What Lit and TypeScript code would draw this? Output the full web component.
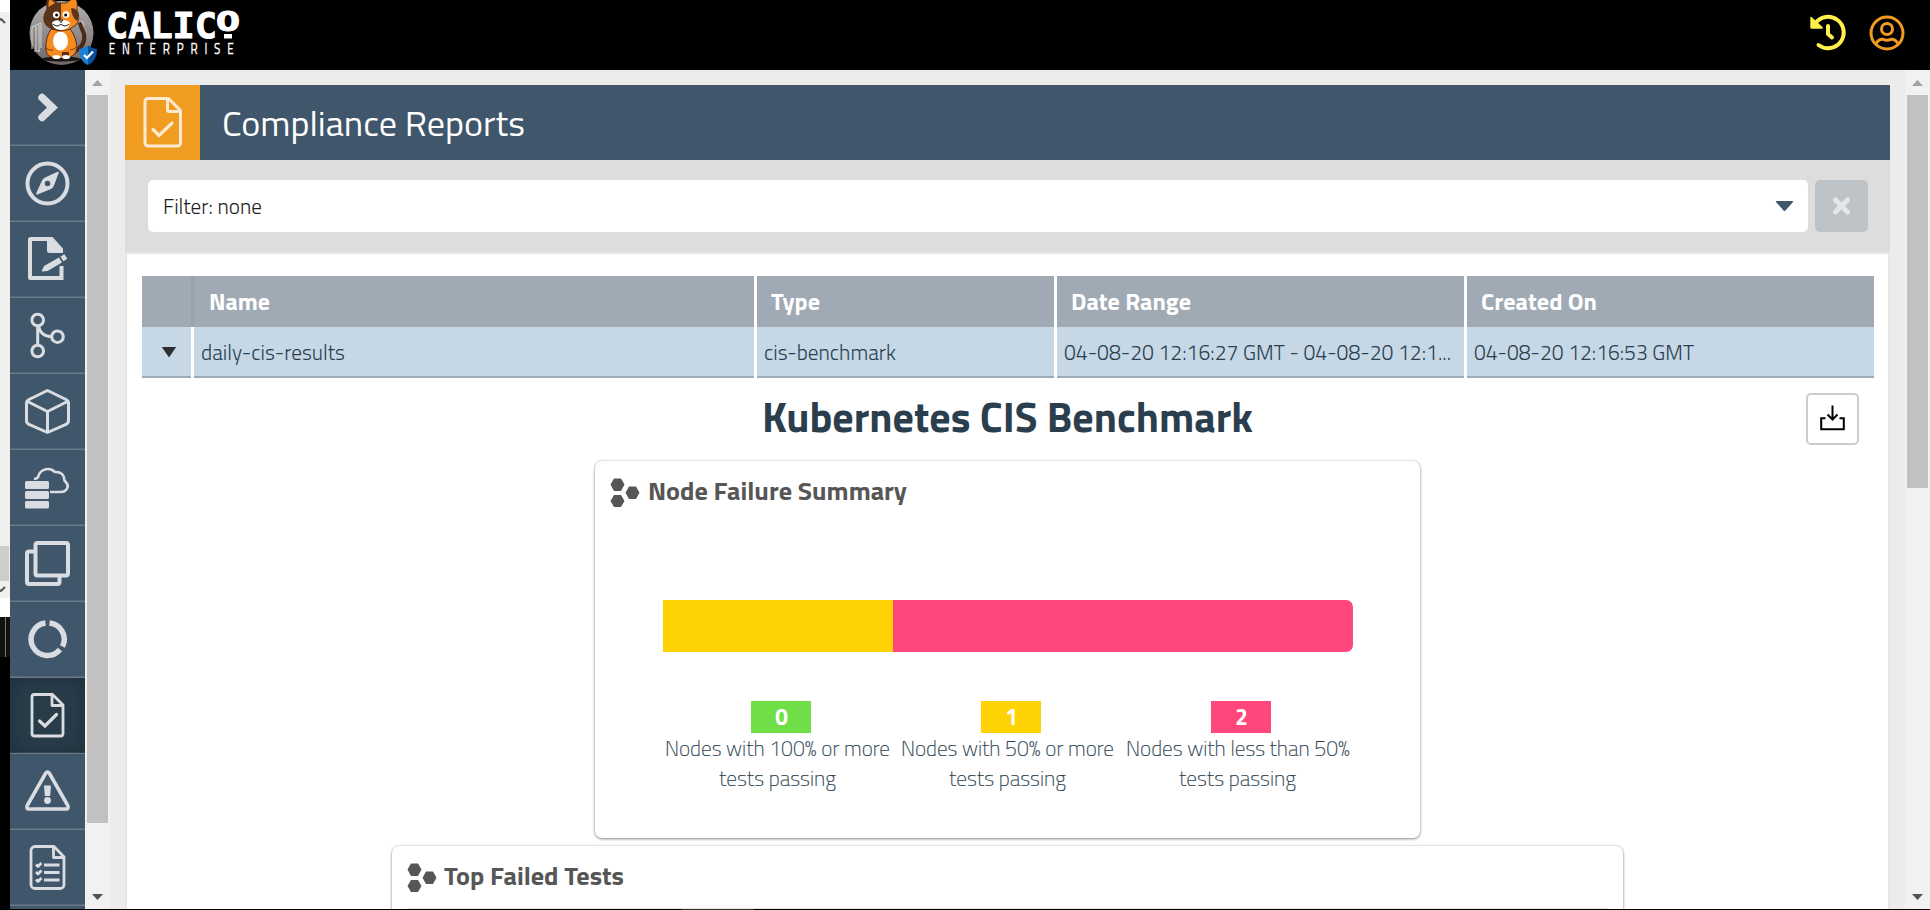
import { LitElement, html, css, TemplateResult } from "lit";
import { customElement, property } from "lit/decorators.js";
import { classMap } from "lit/directives/class-map.js";

// A single line of text condensed or widened to a fixed measure.
@customElement("fit-label")
export class FitLabel extends LitElement {
  @property({ type: Number }) width = 0;
  static styles = css`
    :host { display: inline-block; white-space: nowrap; }
    .run { display: inline-block; transform-origin: 0 50%; }
  `;
  updated() {
    const run = this.renderRoot.querySelector(".run") as HTMLElement;
    run.style.transform = "none";
    const natural = run.getBoundingClientRect().width;
    this.style.width = this.width + "px";
    if (natural > 0) run.style.transform = `scaleX(${this.width / natural})`;
  }
  render() {
    return html`<span class="run"><slot></slot></span>`;
  }
}

const label = (text: string, width: number) => html`<fit-label .width=${width}>${text}</fit-label>`;

const icons: Record<string, TemplateResult> = {
  chevron: html`<svg viewBox="0 0 75 74"><path d="M32 27.500l10.500 10-10.500 10" fill="none" stroke="#d9dce1" stroke-width="7.500" stroke-linecap="round"/></svg>`,
  compass: html`<svg viewBox="0 0 75 74"><circle cx="37.500" cy="37.500" r="20" fill="none" stroke="#d9dce1" stroke-width="4"/><path fill="#d9dce1" fill-rule="evenodd" d="M49 26L44 39.500Q43 41.800 41 43L27.500 48.500Q25.600 49 26.300 47L32 34.500Q33 32.500 35 31.500L47 26Q48.600 25.400 49 26ZM37.500 34.700a2.800 2.800 0 1 0 0 5.600 2.800 2.800 0 0 0 0-5.600Z"/></svg>`,
  policy: html`<svg viewBox="0 0 75 74"><path d="M38 17H20.500Q20 17 20 17.500V55.500Q20 56 20.500 56H51.500V44" fill="none" stroke="#d9dce1" stroke-width="4"/><path fill="#d9dce1" d="M37 15h5.500L53 26.500V31H39.500Q37 31 37 28.500ZM49 35.500l-15 8.500-2.500 5.500 6-.5L52 40.500ZM50.500 34.500l4-2.300 2.800 4.600-4 2.400Z"/></svg>`,
  endpoints: html`<svg viewBox="0 0 75 74"><g fill="none" stroke="#d9dce1" stroke-width="3"><circle cx="27.700" cy="22" r="5.800"/><circle cx="27.700" cy="53" r="5.800"/><circle cx="47.500" cy="38.700" r="5.800"/><path d="M27.700 28v19M28.500 28q2 10.500 13.500 10.700"/></g></svg>`,
  cube: html`<svg viewBox="0 0 75 74"><g fill="none" stroke="#d9dce1" stroke-width="3" stroke-linejoin="round"><path d="M37.500 16.500L56 25.500Q58.500 26.700 58.500 29V47Q58.500 49 56 50.300L37.500 58.500 19 50.300Q16.500 49 16.500 47V29Q16.500 26.700 19 25.500ZM17.500 27.500L37.500 37.500 57.500 27.500M37.500 37.500V58"/></g></svg>`,
  storage: html`<svg viewBox="0 0 75 74"><g fill="#d9dce1"><rect x="15" y="31" width="24" height="8" rx="1.500"/><rect x="15" y="41" width="24" height="8" rx="1.500"/><rect x="15" y="51" width="24" height="7.500" rx="1.500"/></g><path d="M24 29q4.500-.5 4.500-3.500a10 10 0 0 1 16.500-3.500q9-.5 9.500 8.500 5.500 5.500 1.500 9.500-1.500 2-5 2H40" fill="none" stroke="#d9dce1" stroke-width="2.600"/></svg>`,
  windows: html`<svg viewBox="0 0 75 74"><g fill="none" stroke="#d9dce1" stroke-width="4"><rect x="25.500" y="17" width="32.500" height="32.500" rx="2"/><path d="M25.500 25.500H19Q17 25.500 17 27.500V56Q17 58 19 58H47.500Q49.500 58 49.500 56V50"/></g></svg>`,
  donut: html`<svg viewBox="0 0 75 74"><path d="M39.500 21a16.300 16.300 0 0 1 13 23.500M50 47.500a16.300 16.300 0 1 1-14.500-26.500" fill="none" stroke="#d9dce1" stroke-width="5.500"/></svg>`,
  report: html`<svg viewBox="0 0 75 74"><g fill="none" stroke="#d9dce1" stroke-width="2.800" stroke-linejoin="round"><path d="M24.500 16.500H42.500L53 27V55.500a2.500 2.500 0 0 1-2.500 2.500h-26a2.500 2.500 0 0 1-2.500-2.500V19a2.500 2.500 0 0 1 2.500-2.500ZM42 17V27.500H53"/><path d="M29.500 43l5.500 5 11.500-11.500" stroke-width="3.200" stroke-linecap="round" stroke-linejoin="miter"/></g></svg>`,
  alert: html`<svg viewBox="0 0 75 74"><path d="M35.500 19.500Q37.500 16.500 39.500 19.500L57.800 51.500Q59 55 56 55H19Q16 55 17.200 51.500Z" fill="none" stroke="#d9dce1" stroke-width="3.600"/><path d="M34 31.500h7l-.8 10.500h-5.400Z" fill="#d9dce1"/><circle cx="37.500" cy="46.500" r="3.400" fill="#d9dce1"/></svg>`,
  checklist: html`<svg viewBox="0 0 75 74"><g fill="none" stroke="#d9dce1" stroke-width="2.800" stroke-linejoin="round"><path d="M25 16.500H44L54 27V54.500a4 4 0 0 1-4 4H25a4 4 0 0 1-4-4V20.500a4 4 0 0 1 4-4ZM43.500 17V27.500H54"/><path d="M26 34.500l2 2 3.500-3.500M26 42l2 2 3.500-3.500M26 49.500l2 2 3.500-3.500M34 35h15.500M34 42.500h15.500M34 50h15.500"/></g></svg>`,
};

const hexes = html`<svg width="30" height="30" viewBox="0 0 30 30"><path fill="#565656" d="M4 .5h7l3.500 6L11 13H4L.5 6.500ZM4 17h7l3.500 6L11 29H4L.5 23ZM19 8.500h7l3.500 6.300L26 21H19l-3.500-6.200Z"/></svg>`;

const cat = html`<svg width="90" height="70" viewBox="20 0 90 70">
  <defs>
    <linearGradient id="disc" x1="0" y1="0" x2="0" y2="1"><stop offset="0" stop-color="#b5b0b1"/><stop offset="1" stop-color="#6d6768"/></linearGradient>
    <clipPath id="face-left"><rect x="40" y="-4" width="21" height="40"/></clipPath>
  </defs>
  <circle cx="61.500" cy="33" r="32" fill="url(#disc)"/>
  <g fill="none" stroke="#d8d4d4" stroke-width="1"><path d="M32 49V27l9-4v25M36 26v24M39 25v26M34 51h6M79 22h4v10"/></g>
  <ellipse cx="61" cy="59" rx="19" ry="2.500" fill="#1b1412"/>
  <path d="M74 52Q86 46 84 34 82 29 80 24" fill="none" stroke="#4b2a17" stroke-width="4" stroke-linecap="round"/>
  <path d="M51 29Q45 38 46 50 47 58 56 58H66Q76 57 77 48 76 36 70 29Z" fill="#f58a1f" stroke="#3b1d0d" stroke-width=".8"/>
  <path d="M45 48Q50 51 53 50M70 50Q75 50 77 46" fill="none" stroke="#7a3a0e"/>
  <ellipse cx="60.500" cy="41" rx="7.500" ry="9.500" fill="#fff"/>
  <path d="M53 58V52H60V57Z" fill="#f58a1f"/><path d="M62 57V52H69V58Z" fill="#5a2e16"/>
  <ellipse cx="56.500" cy="57" rx="4" ry="2" fill="#fff"/><ellipse cx="66" cy="57" rx="4" ry="2" fill="#fff"/>
  <path d="M47 9Q46 2 48-2 53-2 57 3H66Q71-1 76-2 78 3 77 10 81 19 76 25 69 31 61 31 51 30 46 25 41 18 47 9Z" fill="#f58a1f" stroke="#3b1d0d" stroke-width=".8"/>
  <path d="M47 9Q46 2 48-2 53-2 57 3H66Q71-1 76-2 78 3 77 10 81 19 76 25 69 31 61 31 51 30 46 25 41 18 47 9Z" fill="#5c341b" clip-path="url(#face-left)"/>
  <path d="M48.500 7Q48 2 50-1L55 3Z" fill="#f58a1f"/><path d="M71 8Q78 8 78.500 16 78 20 77 21 72 18 71 8Z" fill="#5c341b"/>
  <path d="M52 23Q53 20 61 20 69 20 70 23 69 30 61 30 53 30 52 23Z" fill="#fff"/>
  <path d="M53 24Q57 28 61 24 65 28 69 24M59 20h4l-2 2.500Z" fill="none" stroke="#222" stroke-width="1"/>
  <circle cx="56.300" cy="14.800" r="3.400" fill="#fff"/><circle cx="66" cy="14.600" r="3.400" fill="#fff"/>
  <circle cx="56.600" cy="15" r="1.500"/><circle cx="65.700" cy="15" r="1.500"/>
  <path d="M88 45.500Q84 48.500 79 49 79 61 88 65Z" fill="#1c7fd6"/><path d="M88 45.500Q92 48.500 97 49 97 61 88 65Z" fill="#0c4f9f"/>
  <path d="M84 55l3 3 6-6.500" fill="none" stroke="#fff" stroke-width="2.200"/>
</svg>`;

const wordmark = html`<svg class="wordmark" width="140" height="70" viewBox="106 0 140 70" fill="#fff" stroke="#fff">
  <text class="mark" x="106" y="37.500" font-size="36" textLength="111" lengthAdjust="spacingAndGlyphs" stroke-width="1">CALIC</text>
  <text class="mark" x="216" y="31" font-size="26" textLength="24" lengthAdjust="spacingAndGlyphs" stroke-width="1">O</text>
  <rect x="224" y="34" width="8" height="4.500" stroke="none"/>
  <text class="sub" x="136" y="54" font-size="14.500" transform="scale(.8 1)" textLength="156" stroke-width=".3">ENTERPRISE</text>
</svg>`;

const arrow = (up: boolean, color: string) =>
  html`<svg width="25" height="25" viewBox="0 0 25 25"><path fill=${color} d=${up ? "M7 16L12.500 10 18 16Z" : "M7 10L12.500 16 18 10Z"}/></svg>`;

const nav = ["chevron", "compass", "policy", "endpoints", "cube", "storage", "windows", "donut", "report", "alert", "checklist"];

const columns = [
  { title: "Name", tw: 61, value: "daily-cis-results", vw: 144 },
  { title: "Type", tw: 49, value: "cis-benchmark", vw: 132 },
  { title: "Date Range", tw: 120, value: "04-08-20 12:16:27 GMT - 04-08-20 12:1...", vw: 387 },
  { title: "Created On", tw: 116, value: "04-08-20 12:16:53 GMT", vw: 220 },
];

const groups = [
  { count: 0, tone: "good", first: "Nodes with 100% or more", width: 225 },
  { count: 1, tone: "fair", first: "Nodes with 50% or more", width: 213 },
  { count: 2, tone: "poor", first: "Nodes with less than 50%", width: 224 },
];

@customElement("app-root")
export class AppRoot extends LitElement {
  static styles = css`
    :host { display: block; width: 1930px; height: 910px; overflow: hidden; background: #000; font-family: "Titillium Web", Roboto, "Open Sans", sans-serif; color: #2b3e4e; }
    * { box-sizing: border-box; }
    svg { display: block; }
    .screen { display: grid; grid-template: 909px 1px / 10px 1920px; }
    .edge { display: flex; flex-direction: column; background: #000; overflow: hidden; }
    .edge > * { flex: none; }
    .edge-top { height: 12px; background: #fff; }
    .edge-track { height: 534px; background: #f0f0f0; padding-top: 6px; }
    .edge-slot { background: #f0f0f0; }
    .edge-thumb { height: 35px; width: 9px; background: #cdcdcd; }
    .edge-arrow { height: 17px; background: #f0f0f0; padding-top: 5px; }
    .edge-gap { height: 19px; background: #fff; }
    .edge-dark { height: 40px; background: linear-gradient(90deg, #111 5px, #777 5px, #777 6px, #111 6px); }
    .floor { grid-column: 1 / -1; background: linear-gradient(90deg, #000 681px, #333 681px, #333 754px, #000 754px); }
    .app { display: flex; flex-direction: column; background: #ececec; overflow: hidden; }
    .top { height: 70px; flex: none; background: #000; display: flex; padding-left: 10px; }
    .wordmark { margin-left: -4px; }
    .mark { font-family: "DejaVu Sans Mono", monospace; font-weight: 700; }
    .sub { font-weight: 400; }
    .tools { margin-left: auto; display: flex; padding: 13px 23px 0 0; gap: 19px; }
    .body { display: flex; height: 839px; }
    .side { width: 75px; flex: none; overflow: hidden; background: #40566a; }
    .item { height: 76px; border-bottom: 1px solid #6b7a89; box-shadow: inset 0 -1px #54687a; }
    .item svg { width: 75px; height: 74px; }
    .item.on { background: #293c4a; box-shadow: inset 0 0 18px #1f2e39, inset 0 -1px #4b5b68; }
    .bar { width: 25px; flex: none; background: #f1f1f1; display: flex; flex-direction: column; align-items: center; }
    .thumb { width: 21px; background: #c1c1c1; }
    .thumb.short { height: 393px; }
    .thumb.long { height: 728px; }
    .bar svg:last-child { margin-top: auto; }
    .main { flex: 1; padding: 15px 15px 0; overflow: hidden; }
    .title { height: 75px; background: #40566a; display: flex; align-items: center; color: #fff; font-size: 36px; }
    .title fit-label { margin-left: 22px; }
    .tile { width: 75px; height: 75px; background: #f09c20; }
    .filter { height: 92px; background: #ddd; display: flex; gap: 7px; padding: 20px 22px 0 23px; }
    .select { flex: 1; height: 52px; border-radius: 5px; background: #fff; display: flex; align-items: center; justify-content: space-between; padding: 0 14px 0 15px; font-size: 21px; font-weight: 300; color: #222; }
    .clear { width: 53px; height: 52px; border-radius: 5px; background: #bcc2c6; }
    .panel { height: 660px; border: 2px solid #e6e6e6; background: #fff; padding: 22px 14px 0 15px; }
    .row { display: grid; grid-template-columns: 49px 560px 297px 407px 407px; column-gap: 3px; }
    .th { height: 51px; background: #a0aab4; color: #fff; font-weight: 700; font-size: 24px; display: flex; align-items: center; padding: 0 0 2px 14px; }
    .th.first { box-shadow: 3px 0 #98a2ad; }
    .th.first + .th { padding-left: 15px; }
    .td { height: 51px; background: #c6d8e6; border-bottom: 2px solid #9dacbb; font-size: 21px; font-weight: 300; display: flex; align-items: center; padding: 0 0 0 7px; color: #2b3e4e; }
    .td.open { padding: 1px 0 0 19px; }
    .head { height: 83px; display: grid; grid-template-columns: 1fr auto 1fr; align-items: center; font-size: 42px; font-weight: 700; padding: 0 15px 1px; }
    .save { grid-column: 3; justify-self: end; width: 53px; height: 52px; border: 2px solid #ccc; border-radius: 5px; }
    .head fit-label { grid-column: 2; margin-left: -2px; padding-bottom: 4px; height: 67px; line-height: 61px; }
    .card { background: #fff; border-radius: 7px; box-shadow: 0 1px 3px rgba(0,0,0,.45), 0 0 2px rgba(0,0,0,.15); }
    .nodes { width: 825px; height: 377px; margin: 0 0 8px 453px; padding: 0 67px 0 68px; }
    .tests { width: 1231px; height: 80px; margin-left: 250px; padding: 0 15px; }
    .card-title { display: flex; height: 62px; padding-top: 17px; gap: 8px; font-size: 25.500px; line-height: 26px; font-weight: 700; color: #565656; }
    .card-title fit-label { height: 28px; }
    .nodes .card-title { margin: 0 -53px; }
    .tests .card-title { border-bottom: 1px solid #e4e4e4; gap: 7px; height: 63px; }
    .meter { display: flex; height: 52px; margin-top: 77px; border-radius: 0 7px 7px 0; overflow: hidden; }
    .good { background: #70df47; }
    .fair { background: #ffd204; }
    .poor { background: #ff477b; }
    .legend { display: grid; grid-template-columns: repeat(3, 230px); margin-top: 49px; }
    .group { display: flex; flex-direction: column; align-items: center; font-size: 21px; line-height: 30px; font-weight: 200; -webkit-text-stroke: .2px #2b3e4e; padding-right: 1px; }
    .badge { width: 60px; height: 32px; margin-left: 7px; color: #fff; font-weight: 700; font-size: 22.500px; line-height: 32px; text-align: center; padding-left: 1px; -webkit-text-stroke: 0; }
  `;

  private renderReport() {
    return html`
      <div class="head">
        <fit-label .width=${491}>Kubernetes CIS Benchmark</fit-label>
        <div class="save"><svg width="49" height="48" viewBox="0 0 49 48"><path d="M17.500 23.300H13.200V34.200H35.800V23.300H31.500M24.500 10.500V24.500M19.500 19.500l5 5 5-5" fill="none" stroke="#000" stroke-width="2"/></svg></div>
      </div>
      <div class="card nodes">
        <div class="card-title">${hexes}${label("Node Failure Summary", 259)}</div>
        <div class="meter">${groups.map((g) => html`<div class=${g.tone} style="width:${(g.count / 3) * 100}%"></div>`)}</div>
        <div class="legend">
          ${groups.map((g) => html`<div class="group"><div class="badge ${g.tone}">${g.count}</div>${label(g.first, g.width)}${label("tests passing", 117)}</div>`)}
        </div>
      </div>
      <div class="card tests"><div class="card-title">${hexes}${label("Top Failed Tests", 180)}</div></div>`;
  }

  render() {
    return html`<div class="screen">
      <div class="edge">
        <div class="edge-top"></div>
        <div class="edge-track"><svg width="10" height="8" viewBox="0 0 10 8"><path d="M-4 5L1 1l4 4" fill="none" stroke="#555" stroke-width="2"/></svg></div>
        <div class="edge-slot"><div class="edge-thumb"></div></div>
        <div class="edge-arrow"><svg width="10" height="8" viewBox="0 0 10 8"><path d="M-4 1L1 5l4-4" fill="none" stroke="#555" stroke-width="2"/></svg></div>
        <div class="edge-gap"></div><div class="edge-dark"></div>
      </div>
      <div class="app">
        <header class="top">${cat}${wordmark}
          <div class="tools">
            <svg width="40" height="40" viewBox="1808 13 40 40"><path d="M1815.500 23A15.700 15.700 0 1 1 1818.500 45" fill="none" stroke="#fff04a" stroke-width="4" stroke-linecap="round"/><path d="M1810.300 17.500Q1810.300 16 1811.800 17.200L1822.500 27Q1823.500 28.800 1822 28.800H1811.500Q1810.300 28.800 1810.300 27.500Z" fill="#fff04a"/><path d="M1828 26v8l4 3.500" fill="none" stroke="#fff04a" stroke-width="4" stroke-linecap="round"/></svg>
            <svg width="40" height="40" viewBox="1867 13 40 40"><g fill="none" stroke="#f09c20" stroke-width="3"><circle cx="1887" cy="33" r="16"/><circle cx="1887" cy="29" r="5.500"/><path d="M1876 43.500Q1879 38.700 1883 39.300 1887 41 1891 39.300 1895 38.700 1898 43.500"/></g></svg>
          </div>
        </header>
        <div class="body">
          <nav class="side">${nav.map((n) => html`<div class=${classMap({ item: true, on: n === "report" })}>${icons[n]}</div>`)}</nav>
          <div class="bar">${arrow(true, "#a3a3a3")}<div class="thumb long"></div>${arrow(false, "#505050")}</div>
          <main class="main">
            <div class="title">
              <div class="tile"><svg width="75" height="75" viewBox="0 0 75 75" fill="none" stroke="#fdead0" stroke-width="3" stroke-linejoin="round"><path d="M23 13.500H43.500L55.500 25.500V58a3 3 0 0 1-3 3H23a3 3 0 0 1-3-3V16.500a3 3 0 0 1 3-3ZM42.500 14V24.500a2 2 0 0 0 2 2H55.500"/><path d="M28 44.500l6 6 13-12.500" stroke-width="3.200" stroke-linecap="round" stroke-linejoin="miter"/></svg></div>
              <fit-label .width=${303}>Compliance Reports</fit-label>
            </div>
            <div class="filter">
              <div class="select">${label("Filter: none", 99)}<svg width="19" height="12" viewBox="0 0 19 12"><path fill="#40566a" d="M1.500 1H17.500Q18.800 1 18 2L10.500 10.500Q9.500 11.500 8.500 10.500L1 2Q.2 1 1.500 1Z"/></svg></div>
              <div class="clear"><svg width="53" height="52" viewBox="0 0 53 52"><path d="M20.500 20l12 12M32.500 20l-12 12" stroke="#e4e6e7" stroke-width="5" stroke-linecap="round"/></svg></div>
            </div>
            <div class="panel">
              <div class="row"><div class="th first"></div>${columns.map((c) => html`<div class="th">${label(c.title, c.tw)}</div>`)}</div>
              <div class="row"><div class="td open"><svg width="16" height="12" viewBox="0 0 16 12"><path fill="#2b2f31" d="M.8 1H15.200L8 11.500Z"/></svg></div>${columns.map((c) => html`<div class="td">${label(c.value, c.vw)}</div>`)}</div>
              ${this.renderReport()}
            </div>
          </main>
          <div class="bar">${arrow(true, "#a3a3a3")}<div class="thumb short"></div>${arrow(false, "#505050")}</div>
        </div>
      </div>
      <div class="floor"></div>
    </div>`;
  }
}
